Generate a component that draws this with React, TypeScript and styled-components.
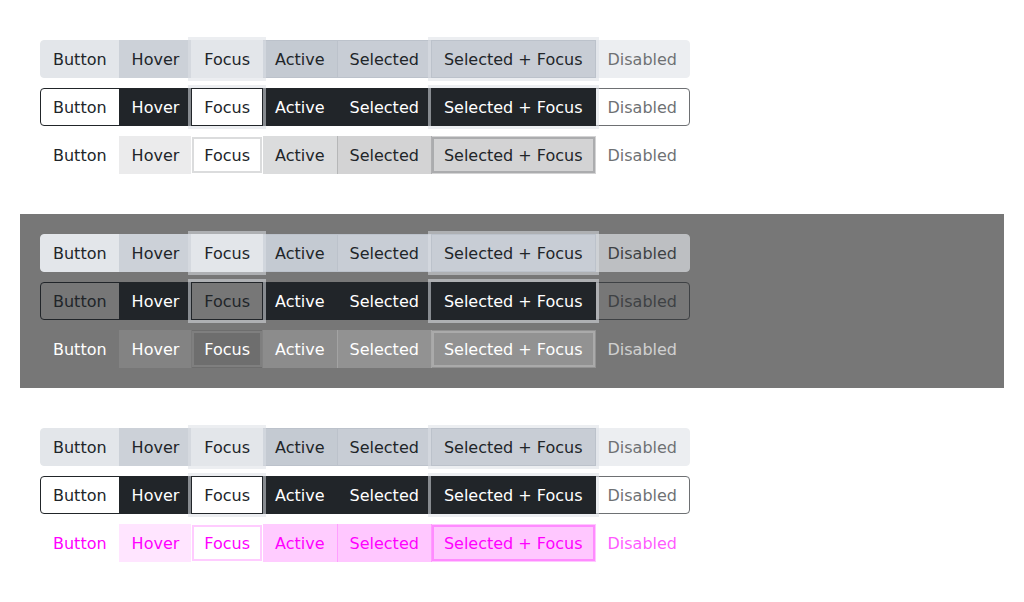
import React from "react";
import styled, { createGlobalStyle, css } from "styled-components";

const GlobalStyle = createGlobalStyle`
  html, body { margin: 0; padding: 0; background: #ffffff; }
  body { font-family: "DejaVu Sans", "Liberation Sans", sans-serif; }
  * { box-sizing: border-box; }
`;

type Variant = "solid" | "outline" | "ghost";
type State = "default" | "hover" | "focus" | "active" | "selected" | "selfocus" | "disabled";
type Tone = "light" | "dark" | "magenta";

const Page = styled.div`
  padding: 20px;
  display: flex;
  flex-direction: column;
  gap: 20px;
`;

const Section = styled.section<{ $dark?: boolean }>`
  padding: 20px;
  display: flex;
  flex-direction: column;
  align-items: flex-start;
  gap: 10px;
  background: ${(p) => (p.$dark ? "#777777" : "transparent")};
`;

const Group = styled.div`
  display: inline-flex;
  position: relative;
`;

const RING = "0 0 0 3px rgba(220, 224, 229, 0.55)";

const inks: Record<Tone, string> = {
  light: "33, 37, 41",
  dark: "255, 255, 255",
  magenta: "255, 0, 255",
};

const solid = (s: State) => {
  switch (s) {
    case "hover":
      return css`background: #ccd1d8; border-color: #ccd1d8;`;
    case "focus":
      return css`background: #e3e6ea; border-color: #e3e6ea; box-shadow: ${RING}; z-index: 2;`;
    case "active":
      return css`background: #c4cad2; border-color: #bcc2cb;`;
    case "selected":
      return css`background: #c8cdd5; border-color: #bcc2cb;`;
    case "selfocus":
      return css`background: #c8cdd5; border-color: #bcc2cb; box-shadow: ${RING}; z-index: 2;`;
    case "disabled":
      return css`background: #e3e6ea; border-color: #e3e6ea; opacity: 0.65;`;
    default:
      return css`background: #e3e6ea; border-color: #e3e6ea;`;
  }
};

const outline = (s: State) => {
  switch (s) {
    case "hover":
    case "active":
    case "selected":
      return css`background: #212529; color: #ffffff;`;
    case "selfocus":
      return css`background: #212529; color: #ffffff; box-shadow: ${RING}; z-index: 2;`;
    case "focus":
      return css`box-shadow: ${RING}; z-index: 2;`;
    case "disabled":
      return css`opacity: 0.65;`;
    default:
      return css``;
  }
};

const ghost = (s: State, tone: Tone) => {
  const ink = inks[tone];
  switch (s) {
    case "hover":
      return css`background: rgba(${ink}, ${tone === "magenta" ? 0.1 : 0.09});`;
    case "focus":
      return css`
        background: ${tone === "dark" ? "rgba(0, 0, 0, 0.07)" : "#ffffff"};
        box-shadow: inset 0 0 0 2px rgba(${ink}, ${tone === "dark" ? 0.12 : tone === "magenta" ? 0.2 : 0.16});
        z-index: 2;
      `;
    case "active":
      return css`background: rgba(${ink}, ${tone === "magenta" ? 0.2 : 0.16});`;
    case "selected":
      return css`background: rgba(${ink}, ${tone === "magenta" ? 0.22 : 0.2});`;
    case "selfocus":
      return css`
        background: rgba(${ink}, ${tone === "magenta" ? 0.22 : 0.2});
        box-shadow: inset 0 0 0 2px rgba(${ink}, ${tone === "magenta" ? 0.3 : 0.22});
        z-index: 2;
      `;
    case "disabled":
      return css`opacity: 0.65;`;
    default:
      return css``;
  }
};

const Btn = styled.button<{ $variant: Variant; $state: State; $tone: Tone }>`
  position: relative;
  font-family: "DejaVu Sans", "Liberation Sans", sans-serif;
  font-size: 16px;
  line-height: 24px;
  padding: 7px 12px 5px;
  margin: 0;
  border: 1px solid transparent;
  border-radius: 0;
  background: transparent;
  white-space: nowrap;
  cursor: pointer;
  outline: none;
  color: ${(p) =>
    p.$variant === "ghost" ? `rgb(${inks[p.$tone]})` : "#212529"};

  &:not(:first-child) { margin-left: -1px; }
  &:first-child { border-top-left-radius: 4px; border-bottom-left-radius: 4px; }
  &:last-child { border-top-right-radius: 4px; border-bottom-right-radius: 4px; }

  ${(p) => p.$variant === "outline" && css`border-color: #212529;`}
  ${(p) =>
    p.$variant === "solid"
      ? solid(p.$state)
      : p.$variant === "outline"
      ? outline(p.$state)
      : ghost(p.$state, p.$tone)}
`;

const items: { label: string; state: State }[] = [
  { label: "Button", state: "default" },
  { label: "Hover", state: "hover" },
  { label: "Focus", state: "focus" },
  { label: "Active", state: "active" },
  { label: "Selected", state: "selected" },
  { label: "Selected + Focus", state: "selfocus" },
  { label: "Disabled", state: "disabled" },
];

const Row: React.FC<{ variant: Variant; tone: Tone }> = ({ variant, tone }) => (
  <Group>
    {items.map((it) => (
      <Btn key={it.label} $variant={variant} $state={it.state} $tone={tone} type="button">
        {it.label}
      </Btn>
    ))}
  </Group>
);

export default function App() {
  return (
    <>
      <GlobalStyle />
      <Page>
        <Section>
          <Row variant="solid" tone="light" />
          <Row variant="outline" tone="light" />
          <Row variant="ghost" tone="light" />
        </Section>
        <Section $dark>
          <Row variant="solid" tone="dark" />
          <Row variant="outline" tone="dark" />
          <Row variant="ghost" tone="dark" />
        </Section>
        <Section>
          <Row variant="solid" tone="light" />
          <Row variant="outline" tone="light" />
          <Row variant="ghost" tone="magenta" />
        </Section>
      </Page>
    </>
  );
}
